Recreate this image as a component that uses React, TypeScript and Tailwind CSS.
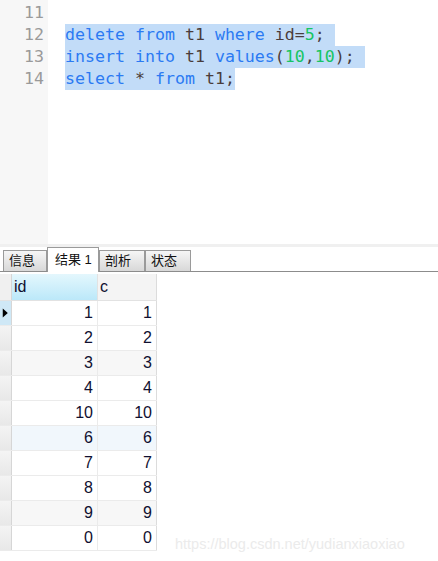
import React from "react";

type Tok = { t: string; k?: "kw" | "num" | "id" };

const codeLines: { n: number; toks: Tok[]; sel: boolean; nl: boolean }[] = [
  { n: 11, toks: [], sel: false, nl: false },
  {
    n: 12,
    sel: true,
    nl: true,
    toks: [
      { t: "delete", k: "kw" },
      { t: " " },
      { t: "from", k: "kw" },
      { t: " t1 " },
      { t: "where", k: "kw" },
      { t: " id=" },
      { t: "5", k: "num" },
      { t: ";" },
    ],
  },
  {
    n: 13,
    sel: true,
    nl: true,
    toks: [
      { t: "insert", k: "kw" },
      { t: " " },
      { t: "into", k: "kw" },
      { t: " t1 " },
      { t: "values", k: "kw" },
      { t: "(" },
      { t: "10", k: "num" },
      { t: "," },
      { t: "10", k: "num" },
      { t: ");" },
    ],
  },
  {
    n: 14,
    sel: true,
    nl: false,
    toks: [
      { t: "select", k: "kw" },
      { t: " * " },
      { t: "from", k: "kw" },
      { t: " t1;" },
    ],
  },
];

const rows: { id: number; c: number; bg: string }[] = [
  { id: 1, c: 1, bg: "bg-white" },
  { id: 2, c: 2, bg: "bg-white" },
  { id: 3, c: 3, bg: "bg-[#f7f7f7]" },
  { id: 4, c: 4, bg: "bg-white" },
  { id: 10, c: 10, bg: "bg-white" },
  { id: 6, c: 6, bg: "bg-[#f1f7fc]" },
  { id: 7, c: 7, bg: "bg-white" },
  { id: 8, c: 8, bg: "bg-white" },
  { id: 9, c: 9, bg: "bg-[#f7f7f7]" },
  { id: 0, c: 0, bg: "bg-white" },
];

const tabs = [
  { label: "信息", w: "w-[44px]", active: false },
  { label: "结果 1", w: "w-[52px]", active: true },
  { label: "剖析", w: "w-[46px]", active: false },
  { label: "状态", w: "w-[46px]", active: false },
];

const mono = { fontFamily: '"DejaVu Sans Mono", "Liberation Mono", monospace' };
const ui = { fontFamily: '"Liberation Sans", "Noto Sans CJK SC", sans-serif' };

const tokColor = (k?: Tok["k"]) =>
  k === "kw" ? "text-[#2b7af3]" : k === "num" ? "text-[#17c463]" : "text-[#4a3c3c]";

export default function App() {
  return (
    <div className="relative flex h-[561px] w-[438px] flex-col overflow-hidden bg-white">
      {/* editor */}
      <div className="flex h-[244px]" style={mono}>
        <div className="w-[48px] bg-[#f7f7f7] pr-[4px] pt-[2px] text-right text-[16.6px] text-[#9a9a9a]">
          {codeLines.map((l) => (
            <div key={l.n} className="h-[22px] leading-[22px]">
              {l.n}
            </div>
          ))}
        </div>
        <div className="flex-1 pl-[17px] pt-[2px] text-[16.6px]">
          {codeLines.map((l) => (
            <div key={l.n} className="h-[22px] leading-[22px] whitespace-pre">
              <span className={l.sel ? "inline-block h-[22px] bg-[#c2dcf8]" : ""}>
                {l.toks.map((t, i) => (
                  <span key={i} className={tokColor(t.k)}>
                    {t.t}
                  </span>
                ))}
                {l.nl ? " " : ""}
              </span>
            </div>
          ))}
        </div>
      </div>
      <div className="h-[3px] bg-[#f0f0f0]" />

      {/* tabs */}
      <div className="flex h-[25px] items-end border-b border-[#8c8c8c] pl-[3px]" style={ui}>
        {tabs.map((t) =>
          t.active ? (
            <div
              key={t.label}
              className={`${t.w} relative z-10 -mb-px h-[25px] border border-b-0 border-[#9a9a9a] bg-white pl-[7px] pt-[2px] text-[13px] leading-[20px] text-[#111]`}
            >
              {t.label}
            </div>
          ) : (
            <div
              key={t.label}
              className={`${t.w} h-[21px] border border-b-0 border-[#9a9a9a] bg-gradient-to-b from-[#f6f6f6] to-[#d8d8d8] pl-[5px] text-[13px] leading-[20px] text-[#111]`}
            >
              {t.label}
            </div>
          ),
        )}
      </div>

      {/* grid */}
      <div className="mt-[2px] w-[157px] text-[16px] text-[#101030]" style={ui}>
        <div className="flex h-[27px] border-b border-[#e2e2e2]">
          <div className="w-[12px] border-r border-[#d6d6d6] bg-[#f0f0f0]" />
          <div className="w-[86px] border-r border-[#e2e2e2] bg-gradient-to-b from-[#e4f7fd] to-[#bbe8f9] pl-[2px] pt-[3px] text-[16px] leading-[20px]">
            id
          </div>
          <div className="w-[59px] border-r border-[#dcdcdc] bg-[#f4f4f4] pl-[2px] pt-[3px] text-[16px] leading-[20px]">
            c
          </div>
        </div>
        {rows.map((r, i) => (
          <div key={i} className={`flex h-[25px] border-b border-[#ebebeb] ${r.bg}`}>
            <div
              className={`flex w-[12px] items-center border-r border-[#d6d6d6] ${
                i === 0 ? "bg-[#cfe8f6]" : "bg-gradient-to-b from-[#f4f4f4] to-[#e8e8e8]"
              }`}
            >
              {i === 0 && (
                <svg width="12" height="12" viewBox="0 0 12 12">
                  <path d="M3 1 L8.5 6 L3 11 Z" fill="#000" />
                </svg>
              )}
            </div>
            <div className="w-[86px] border-r border-[#ebebeb] pr-[4px] text-right leading-[24px]">
              {r.id}
            </div>
            <div className="w-[59px] border-r border-[#dcdcdc] pr-[4px] text-right leading-[24px]">
              {r.c}
            </div>
          </div>
        ))}
      </div>

      {/* watermark */}
      <div
        className="absolute left-[175px] top-[534px] text-[14.5px] text-[#ebebeb]"
        style={{ fontFamily: '"Liberation Sans", Arial, sans-serif' }}
      >
        https://blog.csdn.net/yudianxiaoxiao
      </div>
    </div>
  );
}
